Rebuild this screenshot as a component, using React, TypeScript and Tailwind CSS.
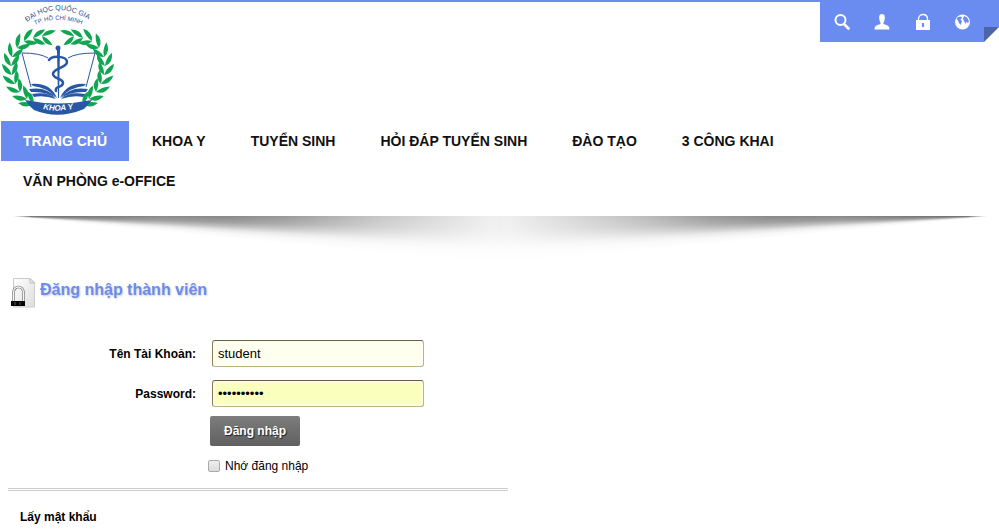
import React from "react";

const NAV_ITEMS = [
  "TRANG CHỦ",
  "KHOA Y",
  "TUYỂN SINH",
  "HỎI ĐÁP TUYỂN SINH",
  "ĐÀO TẠO",
  "3 CÔNG KHAI",
  "VĂN PHÒNG e-OFFICE",
];

// Points along the stem of the left laurel branch: x, y, growth direction in degrees
const STEM = [
  [33, 102, 213],
  [27, 97, 221],
  [20, 90, 231],
  [15, 82, 243],
  [12, 73, 257],
  [11, 64, 272],
  [12, 55, 290],
  [17, 46, 311],
  [24, 39, 335],
  [33, 36, 354],
  [42, 34, 8],
];

function Branch() {
  return (
    <g fill="#10a553">
      {STEM.map(([x, y, a]) => (
        <g key={y} transform={`translate(${x} ${y}) rotate(${a})`}>
          <path d="M0 0Q7 -6 15 0Q7 3 0 0Z" transform="rotate(-29)" />
          <path d="M0 0Q7 -3 14 0Q7 6 0 0Z" transform="rotate(33)" />
        </g>
      ))}
    </g>
  );
}

function Logo() {
  return (
    <svg width="117" height="115" viewBox="0 0 117 115" role="img" aria-label="Khoa Y">
      <defs>
        <path id="arc-top" d="M27 20Q58 -4 92 20" />
        <path id="arc-sub" d="M35 23Q58 12 86 24" />
        <path id="arc-name" d="M43 107Q59 111 80 105" />
      </defs>
      <g fill="#2c4f92" fontFamily="Liberation Sans, Arial, sans-serif">
        <text fontSize="7">
          <textPath href="#arc-top">ĐẠI HỌC QUỐC GIA</textPath>
        </text>
        <text fontSize="6">
          <textPath href="#arc-sub">TP. HỒ CHÍ MINH</textPath>
        </text>
      </g>
      <Branch />
      <g transform="translate(116 0) scale(-1 1)">
        <Branch />
      </g>
      <g fill="none" stroke="#2758a5">
        <path d="M48 56Q40 51 22 51L31 85M68 56Q76 51 95 51L86 85" />
      </g>
      <g fill="#2758a5">
        <path d="M31 82Q50 80 57 96Q46 85 33 84ZM29 87Q47 84 56 96Q46 89 31 90ZM32 92Q48 89 56 97Q44 93 34 95Z" />
        <path d="M86 82Q67 80 60 96Q71 85 84 84ZM88 87Q70 84 61 96Q71 89 86 90ZM85 92Q69 89 61 97Q73 93 83 95Z" />
        <circle cx="58" cy="46" r="2.500" />
        <path d="M57 48H60L59 96H58Z" />
        <path d="M25 98Q58 105 92 98Q87 104 84 107Q58 118 34 108Q29 104 25 98Z" />
      </g>
      <path
        d="M49 58C52 53 67 54 67 60C67 66 53 66 53 72C53 77 63 76 63 81C63 86 54 84 56 89"
        fill="none"
        stroke="#2758a5"
        strokeWidth="2.500"
        strokeLinecap="round"
      />
      <text
        fontSize="8"
        fontWeight="bold"
        fontStyle="italic"
        fill="#fff"
        fontFamily="Liberation Sans, Arial, sans-serif"
      >
        <textPath href="#arc-name">KHOA Y</textPath>
      </text>
    </svg>
  );
}

function ToolButton({ label, children }: { label: string; children: React.ReactNode }) {
  return (
    <button type="button" aria-label={label} className="flex h-10 w-10 items-center justify-center">
      <svg width="18" height="18" viewBox="0 0 18 18" fill="#fff">
        {children}
      </svg>
    </button>
  );
}

function Toolbar() {
  return (
    <div className="flex items-start">
      <div className="flex h-10 bg-[#6a8cf0] px-0.5">
        <ToolButton label="Tìm kiếm">
          <circle cx="7.500" cy="7" r="5" fill="none" stroke="#fff" strokeWidth="2" />
          <path d="M11 11L15.500 15.500" stroke="#fff" strokeWidth="2.600" strokeLinecap="round" />
        </ToolButton>
        <ToolButton label="Tài khoản">
          <path d="M9 1C6 1 6 4 6.3 6C6.5 8 7 8.700 7.500 9.500V11C4 12.200 1.500 12.500 1.500 16.500H16.500C16.500 12.500 14 12.200 10.500 11V9.500C11 8.700 11.500 8 11.700 6C12 4 12 1 9 1Z" />
        </ToolButton>
        <ToolButton label="Đăng nhập">
          <path d="M5.500 8V6C5.500 0 14.500 0 14.500 6V8" fill="none" stroke="#fff" strokeWidth="1.300" />
          <path d="M3 7H17V17H3ZM9 10V14H11V10Z" fillRule="evenodd" />
        </ToolButton>
        <ToolButton label="Ngôn ngữ">
          <circle cx="9.500" cy="9" r="7.500" />
          <path
            d="M3.500 5.500L5 4L8 3.500L9 5L7.500 6.500L9 8.500L7.500 12L6 10L5 7.500ZM11 3L14 4.500L16 8L15 10.500L13.500 8.500L12.500 11L11 8L10 6Z"
            fill="#6a8cf0"
          />
        </ToolButton>
      </div>
      <svg width="15" height="40" viewBox="0 0 15 40" aria-hidden="true">
        <path d="M0 0H15V25H0Z" fill="#6a8cf0" />
        <path d="M0 25H15L0 40Z" fill="#4c64a8" />
      </svg>
    </div>
  );
}

function ShadowHalf() {
  return (
    <div className="h-14 flex-1 bg-[conic-gradient(from_90deg_at_-8px_0,#000_0deg,#000c_1.6deg,#0008_2.6deg,#0003_3.6deg,#0001_4.4deg,transparent_5.6deg,transparent_360deg)] [mask-image:linear-gradient(to_right,transparent,#0009_4%,#0007_30%,#0007_45%,#0006_56%,#0004_70%,#0003_78%,#0002_88%,#0001_98%)]" />
  );
}

function LoginIcon() {
  return (
    <svg width="26" height="30" viewBox="0 0 26 30" aria-hidden="true">
      <defs>
        <linearGradient id="paper" x1="0" y1="0" x2="1" y2="1">
          <stop offset="0" stopColor="#fff" />
          <stop offset="1" stopColor="#ddd" />
        </linearGradient>
      </defs>
      <path d="M3.500 .500H20L24.500 5V29H3.500Z" fill="url(#paper)" stroke="#ccc" />
      <path d="M20 .500V5H24.500Z" fill="#eee" stroke="#bbb" />
      <path d="M3.500 23V15C3.500 7 13.500 7 13.500 15V23" fill="none" stroke="#777" strokeWidth="2.600" />
      <path d="M3.500 23V15C3.500 7 13.500 7 13.500 15V23" fill="none" stroke="#f5f5f5" strokeWidth="1.300" />
      <path d="M1 23H15V28H1Z" fill="#050505" />
      <path d="M5 24V27M10 24V27" stroke="#555" />
    </svg>
  );
}

const field =
  "h-[27px] w-[212px] rounded-[3px] border border-[#c0b185] border-t-[#6a6045] border-l-[#8b7d58] px-[5px] text-[13px] text-black outline-none";

export default function App() {
  return (
    <div className="min-h-screen bg-white font-['Liberation_Sans',Arial,sans-serif] text-xs text-black">
      <header className="border-t-2 border-[#6a8cf0]">
        <div className="flex items-start justify-between">
          <a href="#" className="block pb-1">
            <Logo />
          </a>
          <Toolbar />
        </div>
        <nav className="px-px">
          <ul className="flex max-w-[960px] flex-wrap gap-x-px">
            {NAV_ITEMS.map((item, i) => (
              <li key={item}>
                <a
                  href="#"
                  className={
                    i === 0
                      ? "block bg-[#6a8cf0] px-[22px] text-sm leading-10 font-bold text-white"
                      : "block px-[22px] text-sm leading-10 font-bold text-[#111]"
                  }
                >
                  {item}
                </a>
              </li>
            ))}
          </ul>
        </nav>
      </header>

      <div className="mx-3 mt-[15px] flex" aria-hidden="true">
        <ShadowHalf />
        <div className="flex flex-1 -scale-x-100">
          <ShadowHalf />
        </div>
      </div>

      <main className="max-w-[516px] px-2 pt-1.5">
        <h1 className="flex items-start gap-1 pl-0.5 text-base leading-6 font-bold text-[#6a8cf0] [text-shadow:1px_1px_2px_#ccc]">
          <LoginIcon />
          Đăng nhập thành viên
        </h1>

        <form className="pt-8" onSubmit={(e) => e.preventDefault()}>
          <div className="flex items-center gap-4">
            <label htmlFor="user" className="w-[188px] text-right font-bold">
              Tên Tài Khoản:
            </label>
            <input id="user" type="text" defaultValue="student" className={`${field} bg-[#fffff0]`} />
          </div>
          <div className="flex items-center gap-4 pt-[13px]">
            <label htmlFor="pass" className="w-[188px] text-right font-bold">
              Password:
            </label>
            <input
              id="pass"
              type="password"
              defaultValue="abcdefghij"
              className={`${field} bg-[#faffbd] shadow-[inset_0_0_0_2px_#fffbe0]`}
            />
          </div>
          <div className="pt-[9px] pl-[202px]">
            <button
              type="submit"
              className="block h-[30px] rounded-xs bg-linear-to-b from-[#7d7d7d] to-[#606060] px-3.5 font-bold text-white [text-shadow:1px_1px_1px_#222]"
            >
              Đăng nhập
            </button>
          </div>
          <div className="flex items-center gap-[5px] pt-3 pb-3.5 pl-[200px]">
            <input
              id="remember"
              type="checkbox"
              className="size-3 appearance-none rounded-xs border border-[#aaa] bg-linear-to-b from-[#eee] to-[#ddd] checked:bg-[#6a8cf0]"
            />
            <label htmlFor="remember">Nhớ đăng nhập</label>
          </div>
        </form>

        <div className="border-t-3 border-double border-[#ccc] px-3 pt-[18px]">
          <a href="#" className="font-bold">
            Lấy mật khẩu
          </a>
        </div>
      </main>
    </div>
  );
}
